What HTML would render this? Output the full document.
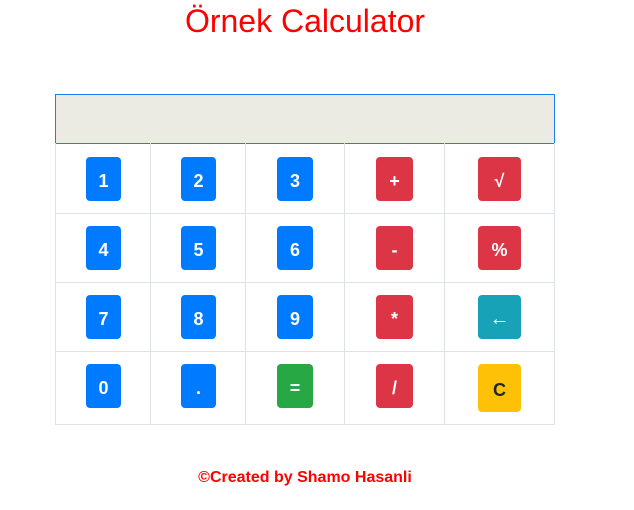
<!DOCTYPE html>
<html><head><meta charset="utf-8"><style>
body{margin:0;width:634px;height:510px;background:#fff;font-family:"Liberation Sans",sans-serif;position:relative;overflow:hidden}
.t{position:absolute;left:0;width:610px;text-align:center;color:#f00;}
.disp{position:absolute;left:55px;top:94px;width:498px;height:48px;background:#ebeae3;border:1px solid #1a7ff0}
.v{position:absolute;width:1px;background:#dee2e6;top:143px;height:281px}
.h{position:absolute;height:1px;background:#dee2e6;left:55px;width:500px}
.b{position:absolute;color:#fff;font-weight:bold;font-size:18px;display:flex;align-items:center;justify-content:center;border-radius:4px;box-sizing:border-box;padding-top:4px}
.bl{background:#007bff}.r{background:#dc3545}.g{background:#28a745}.c{background:#17a2b8}.y{background:#ffc107;color:#212529}
</style></head><body>
<div class="t" style="top:2px;font-size:32px;line-height:38px">Örnek Calculator</div>
<div class="disp"></div>
<div class="v" style="left:55px"></div><div class="v" style="left:150px"></div><div class="v" style="left:245px"></div><div class="v" style="left:344px"></div><div class="v" style="left:444px"></div><div class="v" style="left:554px"></div>
<div class="h" style="top:213px"></div><div class="h" style="top:282px"></div><div class="h" style="top:351px"></div><div class="h" style="top:424px"></div>

<div class="b bl" style="left:86px;top:157px;width:35px;height:44px">1</div>
<div class="b bl" style="left:181px;top:157px;width:35px;height:44px">2</div>
<div class="b bl" style="left:277px;top:157px;width:36px;height:44px">3</div>
<div class="b r" style="left:376px;top:157px;width:37px;height:44px">+</div>
<div class="b r" style="left:478px;top:157px;width:43px;height:44px">√</div>

<div class="b bl" style="left:86px;top:226px;width:35px;height:44px">4</div>
<div class="b bl" style="left:181px;top:226px;width:35px;height:44px">5</div>
<div class="b bl" style="left:277px;top:226px;width:36px;height:44px">6</div>
<div class="b r" style="left:376px;top:226px;width:37px;height:44px">-</div>
<div class="b r" style="left:478px;top:226px;width:43px;height:44px">%</div>

<div class="b bl" style="left:86px;top:295px;width:35px;height:44px">7</div>
<div class="b bl" style="left:181px;top:295px;width:35px;height:44px">8</div>
<div class="b bl" style="left:277px;top:295px;width:36px;height:44px">9</div>
<div class="b r" style="left:376px;top:295px;width:37px;height:44px">*</div>
<div class="b c" style="left:478px;top:295px;width:43px;height:44px;font-weight:normal;font-size:20px">←</div>

<div class="b bl" style="left:86px;top:364px;width:35px;height:44px">0</div>
<div class="b bl" style="left:181px;top:364px;width:35px;height:44px">.</div>
<div class="b g" style="left:277px;top:364px;width:36px;height:44px">=</div>
<div class="b r" style="left:376px;top:364px;width:37px;height:44px">/</div>
<div class="b y" style="left:478px;top:364px;width:43px;height:48px">C</div>

<div class="t" style="top:469px;font-size:16px;font-weight:bold">©Created by Shamo Hasanli</div>
</body></html>
